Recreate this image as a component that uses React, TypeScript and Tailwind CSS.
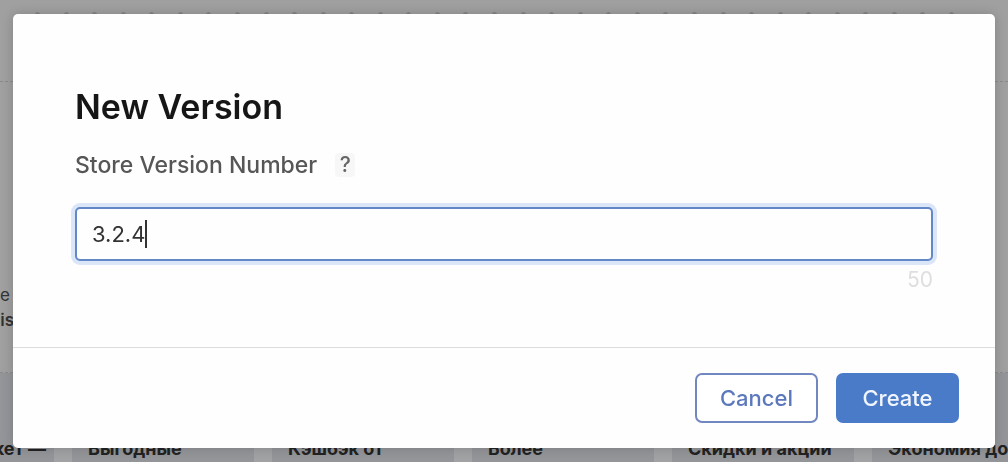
import { useState } from 'react';

const captions = ['Выгодные', 'Кэшбэк от', 'Более', 'Скидки и акции', 'Экономия до'];
const ticks = Array.from({ length: 33 }, (_, i) => i);

function BackgroundPage() {
  return (
    <div aria-hidden="true" className="flex h-screen flex-col overflow-hidden bg-[#a0a0a0] text-[#222]">
      <div className="flex h-[82px] shrink-0 items-start justify-between border-b border-dashed border-[#8a8a8a] pt-[12px] pr-[54px] pl-[35px]">
        {ticks.map((i) => (
          <span key={i} className="h-[3px] w-[5px] rounded-t-sm bg-[#858585]" />
        ))}
      </div>
      <div className="flex h-[291px] shrink-0 flex-col items-start justify-end border-b border-dashed border-[#8a8a8a] pb-[39px] text-[17px] leading-[25px] text-[#333]">
        <span>e</span>
        <b className="-ml-[12px] font-semibold">Dis</b>
      </div>
      <div className="flex grow gap-[18px] bg-[#a0a2a4]">
        <div className="flex w-[54px] shrink-0 items-start justify-end bg-[#939598] pt-[64px] pr-[8px]">
          <span className="text-[18px] leading-[24px] font-bold whitespace-nowrap">кет —</span>
        </div>
        {captions.map((caption) => (
          <div key={caption} className="flex w-[182px] shrink-0 items-start bg-[#939598] px-[16px] pt-[64px]">
            <span className="text-[18px] leading-[24px] font-bold whitespace-nowrap">{caption}</span>
          </div>
        ))}
      </div>
    </div>
  );
}

export default function App() {
  const [version, setVersion] = useState('3.2.4');

  return (
    <div className="font-['Inter','Liberation_Sans',sans-serif]">
      <BackgroundPage />
      <div className="fixed inset-0 flex items-start px-[13px] pt-[14px]">
        <form
          role="dialog"
          aria-labelledby="dialog-title"
          onSubmit={(e) => e.preventDefault()}
          className="w-full rounded-[5px] bg-[#fefefe] shadow-[0_0_12px_rgba(0,0,0,0.18)]"
        >
          <div className="px-[62px] pt-[72px] pb-[55px]">
            <h1 id="dialog-title" className="text-[34px] leading-[42px] font-semibold text-[#161616]">
              New Version
            </h1>
            <div className="mt-[25px] flex items-center gap-[18px]">
              <label htmlFor="version" className="text-[23px] leading-[24px] font-medium text-[#565656]">
                Store Version Number
              </label>
              <button
                type="button"
                aria-label="Help"
                className="h-[24px] w-[20px] rounded-sm bg-[#f7f7f7] text-[21px] leading-[24px] font-medium text-[#666]"
              >
                ?
              </button>
            </div>
            <div className="relative mt-[30px] h-[54px]">
              <input
                id="version"
                type="text"
                value={version}
                onChange={(e) => setVersion(e.target.value)}
                className="h-full w-full rounded-[5px] border-2 border-[#6288c8] bg-[#fefefe] px-[15px] text-[22px] text-[#333] caret-transparent shadow-[0_0_0_4px_#dbe6f8] outline-none"
              />
              <div className="pointer-events-none absolute inset-y-0 left-[17px] flex items-center text-[22px]">
                <span className="invisible">{version}</span>
                <span className="h-[28px] w-[2px] bg-[#333]" />
              </div>
            </div>
            <p className="mt-[7px] text-right text-[21px] leading-[24px] text-[#dedede]">50</p>
          </div>
          <div className="flex justify-end gap-[18px] border-t border-[#dcdcdc] px-[36px] py-[25px]">
            <button
              type="button"
              className="h-[50px] w-[123px] rounded-[7px] border-2 border-[#7088bf] bg-white text-[22px] font-medium text-[#5c78bd]"
            >
              Cancel
            </button>
            <button
              type="submit"
              className="h-[50px] w-[123px] rounded-[7px] bg-[#4a7bc8] text-[22px] font-medium text-[#f0f5ff]"
            >
              Create
            </button>
          </div>
        </form>
      </div>
    </div>
  );
}
